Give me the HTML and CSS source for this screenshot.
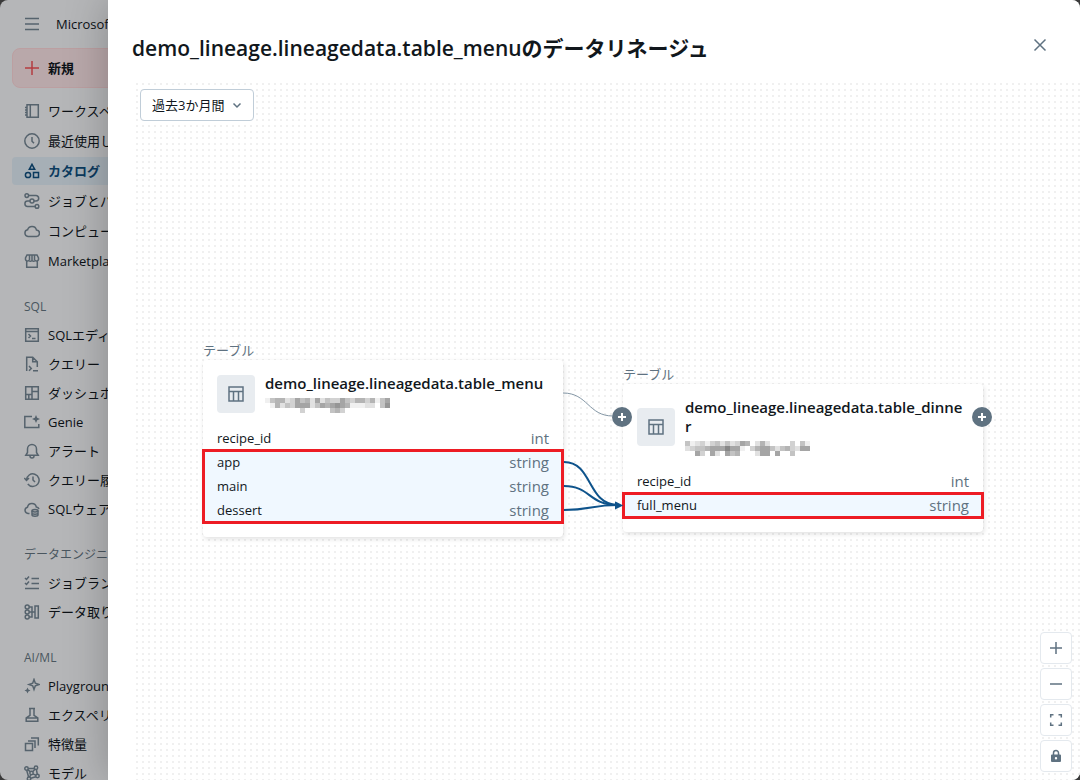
FILE: index.html
```html
<!DOCTYPE html>
<html lang="ja">
<head>
  <meta charset="UTF-8">
  <title>データリネージュ</title>
  <link rel="stylesheet" href="styles.css">
</head>
<body>

<div class="app">

  <!-- サイドバー -->
  <nav class="sidebar">
    <div class="brand">
      <button class="icon-btn" aria-label="メニュー">
        <svg class="icon" viewBox="0 0 16 16"><path d="M1 2.5h14M1 8h14M1 13.5h14"/></svg>
      </button>
      <span>Microsoft Azure</span>
    </div>

    <button class="new-btn">
      <svg class="icon" viewBox="0 0 16 16"><path d="M8 1v14M1 8h14"/></svg>
      新規
    </button>

    <div class="group main">
      <a href="#"><svg class="icon" viewBox="0 0 16 16"><path d="M3 1.7h11.3v12.6H3zM6.3 1.7v12.6M1 4.5h2M1 7h2M1 9.5h2M1 12h2"/></svg>ワークスペース</a>
      <a href="#"><svg class="icon" viewBox="0 0 16 16"><circle cx="8" cy="8" r="7.2"/><path d="M8 4v4.2l2 2"/></svg>最近使用したもの</a>
      <a href="#" class="active"><svg class="icon" viewBox="0 0 16 16"><path d="M8 1.3l2.7 5H5.3zM9.5 9.5h5v5h-5z"/><circle cx="4" cy="12" r="2.6"/></svg>カタログ</a>
      <a href="#"><svg class="icon" viewBox="0 0 16 16"><circle cx="2.800" cy="2.600" r="1.800"/><circle cx="8" cy="8" r="2"/><circle cx="13" cy="13.400" r="1.800"/><path d="M4.600 2.600H12a2.600 2.600 0 010 5.400h-2M6 8H3.600a2.700 2.700 0 000 5.400h7.600"/></svg>ジョブとパイプライン</a>
      <a href="#"><svg class="icon" viewBox="0 0 16 16"><path d="M4 13.500h8a3.200 3.200 0 00.500-6.400A4.600 4.600 0 003.600 6.800a3.400 3.400 0 00.4 6.700z"/></svg>コンピューティング</a>
      <a href="#"><svg class="icon" viewBox="0 0 16 16"><path d="M3 2h10l1.500 3v1.500a2 2 0 01-3.300 1 2.300 2.300 0 01-3.200 0 2.300 2.300 0 01-3.200 0 2 2 0 01-3.300-1V5zM2.700 8v6.300h10.600V8M5.500 2v5M8 2v5M10.500 2v5"/></svg>Marketplace</a>
    </div>

    <h3>SQL</h3>
    <div class="group">
      <a href="#"><svg class="icon" viewBox="0 0 16 16"><path d="M1.700 1.700h12.600v12.600H1.700zM1.700 4.500h12.600M4.500 7l2 2-2 2M8 11.500h3.500"/></svg>SQLエディタ</a>
      <a href="#"><svg class="icon" viewBox="0 0 16 16"><path d="M2.700 15V1.200h6l4.600 4.600V11M8.700 1.200v4.600h4.600M5 10l2.300 2.400L5 14.800M9 14.800h5"/></svg>クエリー</a>
      <a href="#"><svg class="icon" viewBox="0 0 16 16"><path d="M1.700 1.700h12.600v12.600H1.700zM8 1.700v12.600M1.700 9.500H8M8 6.500h6.300M4.800 9.500v4.800"/></svg>ダッシュボード</a>
      <a href="#"><svg class="icon" viewBox="0 0 16 16"><path d="M8 2.500H.8v11h14V10"/><path class="solid" d="M12 1l1.200 2.800L16 5l-2.800 1.200L12 9l-1.200-2.800L8 5l2.800-1.200z"/></svg>Genie</a>
      <a href="#"><svg class="icon" viewBox="0 0 16 16"><path d="M3.500 9.500V6a4.500 4.500 0 019 0v3.500l1.700 2.800H1.800zM6 13a2 2 0 004 0"/></svg>アラート</a>
      <a href="#"><svg class="icon" viewBox="0 0 16 16"><path d="M2.500 8A6.300 6.300 0 113.800 12M.3 6l2.200 2.500L5 6M9 4.500V8l2 2"/></svg>クエリー履歴</a>
      <a href="#"><svg class="icon" viewBox="0 0 16 16"><path d="M5.500 12.500H4a3.200 3.200 0 01-.5-6.300 4.500 4.500 0 018.800-.2A3 3 0 0115 8"/><ellipse cx="11" cy="9.800" rx="3" ry="1.200"/><path d="M8 9.800V14c0 1.600 6 1.600 6 0V9.800M8 12c0 1.600 6 1.600 6 0"/></svg>SQLウェアハウス</a>
    </div>

    <h3>データエンジニアリング</h3>
    <div class="group">
      <a href="#"><svg class="icon" viewBox="0 0 16 16"><path d="M1 3l1.500 1.500L5 1.500M1 8l1.500 1.500L5 6.500M7.500 3.500H15M7.500 8.500H15M1 13.500h14"/></svg>ジョブラン</a>
      <a href="#"><svg class="icon" viewBox="0 0 16 16"><circle cx="3.200" cy="3" r="2"/><circle cx="3.200" cy="8" r="2"/><circle cx="3.200" cy="13" r="2"/><path d="M5.200 3H8v10H5.200M5.200 8h6M11 8V2h3.300v12H11V8"/></svg>データ取り込み</a>
    </div>

    <h3>AI/ML</h3>
    <div class="group">
      <a href="#"><svg class="icon" viewBox="0 0 16 16"><path d="M10 1.500l1.300 3.700L15 6.500l-3.700 1.300L10 11.500 8.700 7.800 5 6.500l3.700-1.300z"/><path class="solid" d="M3.500 9.500l.9 2.100 2.100.9-2.100.9-.9 2.100-.9-2.100-2.100-.9 2.100-.9z"/></svg>Playground</a>
      <a href="#"><svg class="icon" viewBox="0 0 16 16"><path d="M5 1.500h6M6 1.500v6.800L2.200 11v3.300h11.600V11L10 8.300V1.500M2.500 11h11"/></svg>エクスペリメント</a>
      <a href="#"><svg class="icon" viewBox="0 0 16 16"><path d="M1.500 7.500h7v7h-7zM4 5h7v7M7 2h7.300v7.500"/></svg>特徴量</a>
      <a href="#"><svg class="icon" viewBox="0 0 16 16"><circle cx="2.500" cy="3.500" r="1.700"/><circle cx="12" cy="2.800" r="1.700"/><circle cx="7.500" cy="8" r="1.700"/><circle cx="13.500" cy="11" r="1.700"/><circle cx="5" cy="13.700" r="1.700"/><path d="M4.200 3.500h6M3.800 4.600l2.600 2.300M11 4.200L8.600 6.700M12.400 4.500l.9 4.800M9 8.800l3 1.600M6.800 9.500l-1.200 2.600M2.700 5.200l1.900 6.800M6.700 13.200l5.200-1.500"/></svg>モデル</a>
    </div>
  </nav>

  <!-- リネージュのドロワー -->
  <main class="drawer">
    <header class="drawer-head">
      <h1>demo_lineage.lineagedata.table_menuのデータリネージュ</h1>
      <button class="icon-btn close" aria-label="閉じる">
        <svg class="icon" viewBox="0 0 16 16"><path d="M2.500 2.500l11 11M13.500 2.500l-11 11"/></svg>
      </button>
    </header>

    <div class="canvas">
      <div class="period">
        <select aria-label="期間">
          <option>過去3か月間</option>
          <option>過去1年間</option>
        </select>
        <svg class="chevron" viewBox="0 0 10 10"><path d="M1.500 3.500L5 7l3.500-3.500"/></svg>
      </div>

      <section class="node menu">
        <div class="kind">テーブル</div>
        <div class="card">
          <div class="card-head">
            <span class="table-icon"><svg class="icon" viewBox="0 0 16 16"><path d="M1 1h14v14H1zM1 5.500h14M5.500 5.500V15M10.500 5.500V15"/></svg></span>
            <div class="card-title">
              <h2>demo_lineage.lineagedata.table_menu</h2>
              <svg class="mosaic" data-rows="1455236452624336435535146 0152436662465676511122047 0000000300000453000000000"></svg>
            </div>
          </div>
          <ul>
            <li><span>recipe_id</span><span class="type">int</span></li>
          </ul>
          <ul class="marked">
            <li><span>app</span><span class="type">string</span></li>
            <li><span>main</span><span class="type">string</span></li>
            <li><span>dessert</span><span class="type">string</span></li>
          </ul>
        </div>
      </section>

      <section class="node dinner">
        <div class="kind">テーブル</div>
        <div class="card">
          <div class="card-head">
            <span class="table-icon"><svg class="icon" viewBox="0 0 16 16"><path d="M1 1h14v14H1zM1 5.500h14M5.500 5.500V15M10.500 5.500V15"/></svg></span>
            <div class="card-title">
              <h2>demo_lineage.lineagedata.table_dinner</h2>
              <svg class="mosaic" data-rows="4123134242365025200003041 2344566686610356642453266 0063062064500026606004000"></svg>
            </div>
          </div>
          <ul>
            <li><span>recipe_id</span><span class="type">int</span></li>
          </ul>
          <ul class="marked">
            <li><span>full_menu</span><span class="type">string</span></li>
          </ul>
        </div>
        <button class="expand left" aria-label="上流を展開"><svg viewBox="0 0 10 10"><path d="M5 1v8M1 5h8"/></svg></button>
        <button class="expand right" aria-label="下流を展開"><svg viewBox="0 0 10 10"><path d="M5 1v8M1 5h8"/></svg></button>
      </section>

      <svg class="edges">
        <path class="thin" d="M431 310C456 310 456 333 481 333"/>
        <path d="M432 379C461 379 455 422 486 422"/>
        <path d="M432 403C459 403 456 422 486 422"/>
        <path d="M432 427C459 427 459 422 486 422"/>
        <path class="head" d="M484 420l5 2.500-5 2.500z"/>
      </svg>

      <div class="controls">
        <button aria-label="拡大"><svg class="icon" viewBox="0 0 16 16"><path d="M8 2v12M2 8h12"/></svg></button>
        <button aria-label="縮小"><svg class="icon" viewBox="0 0 16 16"><path d="M2 8h12"/></svg></button>
        <button aria-label="全体表示"><svg class="icon" viewBox="0 0 16 16"><path d="M2.700 5.500V2.700h2.800M10.500 2.700h2.800v2.800M13.300 10.500v2.800h-2.800M5.500 13.300H2.700v-2.800"/></svg></button>
        <button aria-label="ロック"><svg class="icon" viewBox="0 0 16 16"><path d="M5.500 7V5a2.500 2.500 0 015 0v2"/><path class="solid" fill-rule="evenodd" d="M4 6.500h8a1 1 0 011 1V13a1 1 0 01-1 1H4a1 1 0 01-1-1V7.500a1 1 0 011-1zM8 9a1.200 1.200 0 100 2.400A1.200 1.200 0 008 9z"/></svg></button>
      </div>
    </div>
  </main>

</div>

<script>
  // 所有者名のモザイク (0 = 白, 9 = 濃い)
  document.querySelectorAll('.mosaic').forEach(svg => {
    svg.dataset.rows.split(' ').forEach((row, y) => {
      [...row].forEach((level, x) => {
        if (level === '0') return;
        const c = 255 - level * 15;
        const rect = document.createElementNS('http://www.w3.org/2000/svg', 'rect');
        rect.setAttribute('x', x * 5);
        rect.setAttribute('y', y * 5);
        rect.setAttribute('width', 5);
        rect.setAttribute('height', 5);
        rect.setAttribute('fill', `rgb(${c},${c},${c})`);
        svg.appendChild(rect);
      });
    });
  });
</script>

</body>
</html>
```
FILE: styles.css
```css
* {
  box-sizing: border-box;
}
body {
  margin: 0;
  background: #3a3a3a;
  color: #11171c;
  font: 13px/20px "Open Sans", "Noto Sans CJK JP", sans-serif;
}
h1, h2, h3, ul {
  margin: 0;
  padding: 0;
}
button, select {
  font: inherit;
  color: inherit;
  cursor: pointer;
}
.icon {
  width: 16px;
  height: 16px;
  flex: none;
  fill: none;
  stroke: currentColor;
  stroke-width: 1.5;
}
.icon .solid {
  fill: currentColor;
  stroke: none;
}
.icon-btn {
  display: flex;
  align-items: center;
  padding: 0;
  border: 0;
  background: none;
  color: #5f7281;
}

.app {
  position: relative;
  height: 100vh;
  overflow: hidden;
  border-radius: 8px;
  background: #b5b6b8;
}

/* sidebar */
.sidebar {
  width: 200px;
  padding: 12px 12px 0;
  color: #0c1116;
  white-space: nowrap;
}
.sidebar .icon {
  color: #56636d;
}
.brand {
  display: flex;
  align-items: center;
  gap: 16px;
  height: 24px;
  padding-left: 12px;
}
.new-btn {
  display: flex;
  align-items: center;
  gap: 8px;
  width: 100%;
  height: 40px;
  margin: 12px 0 9px;
  padding: 0 11px;
  border: 1px solid #bc9fa1;
  border-radius: 8px;
  background: #b9a8aa;
  font-weight: 600;
}
.new-btn .icon {
  color: #b53c40;
}
.group {
  display: flex;
  flex-direction: column;
  gap: 1px;
}
.group.main {
  gap: 2px;
}
.group a {
  display: flex;
  align-items: center;
  gap: 8px;
  height: 28px;
  padding: 0 12px;
  border-radius: 4px;
  color: inherit;
  line-height: 14px;
  text-decoration: none;
}
.group a.active {
  background: #a6afb6;
  color: #0b3a5e;
  font-weight: 600;
}
.group a.active .icon {
  color: #0b3a5e;
}
.sidebar h3 {
  padding: 22px 12px 4px;
  color: #4a565f;
  font-size: 12px;
  font-weight: 400;
}

/* drawer */
.drawer {
  position: absolute;
  top: 0;
  right: 0;
  bottom: 0;
  width: 90%;
  display: flex;
  flex-direction: column;
  padding-left: 24px;
  background: #fff;
  box-shadow: 0 0 40px rgba(0, 0, 0, 0.25);
}
.drawer-head {
  display: flex;
  justify-content: space-between;
  align-items: flex-start;
  padding: 32px 32px 19px 0;
}
.drawer-head h1 {
  font-size: 21px;
  line-height: 32px;
  font-weight: 600;
}
.close {
  height: 26px;
}
.canvas {
  position: relative;
  flex: 1;
  padding: 6px 8px;
  background: radial-gradient(circle, #f0f0f0 1px, transparent 1px) 2px -2px / 6px 6px;
}
.period {
  position: relative;
  display: inline-block;
}
.period select {
  appearance: none;
  height: 32px;
  width: 114px;
  padding: 0 24px 0 11px;
  border: 1px solid #c0cdd8;
  border-radius: 4px;
  background: #fff;
}
.chevron {
  position: absolute;
  top: 11px;
  right: 12px;
  width: 10px;
  height: 10px;
  fill: none;
  stroke: #5f7281;
  stroke-width: 1.5;
  pointer-events: none;
}

/* lineage graph */
.node {
  position: absolute;
  width: 360px;
}
.node.menu {
  left: 71px;
  top: 257px;
}
.node.dinner {
  left: 491px;
  top: 281px;
}
.kind {
  color: #5f7281;
}
.card {
  padding: 14px 0 15px;
  border-radius: 4px;
  background: #fff;
  box-shadow: 1px 2px 5px rgba(0, 0, 0, 0.12);
}
.card-head {
  display: flex;
  align-items: center;
  gap: 10px;
  padding: 0 18px 13px 14px;
}
.table-icon {
  display: flex;
  align-items: center;
  justify-content: center;
  flex: none;
  width: 38px;
  height: 38px;
  border-radius: 4px;
  background: #e8ecf0;
  color: #5f7281;
}
.card-title {
  min-width: 0;
}
.card h2 {
  font-size: 15px;
  line-height: 19px;
  font-weight: 600;
  word-break: break-all;
}
.mosaic {
  display: block;
  width: 125px;
  height: 15px;
  margin-top: 5px;
  shape-rendering: crispEdges;
}
.card ul {
  list-style: none;
}
.card li {
  display: flex;
  align-items: center;
  justify-content: space-between;
  height: 24px;
  padding: 0 14px;
}
.type {
  color: #5f7281;
  font-size: 15px;
}
.marked {
  position: relative;
  background: #f0f8ff;
}
.marked::after {
  content: "";
  position: absolute;
  inset: -1px -1px -2px;
  border: 3px solid #ed1c24;
}
.expand {
  position: absolute;
  top: 43px;
  display: flex;
  align-items: center;
  justify-content: center;
  width: 20px;
  height: 20px;
  padding: 0;
  border: 0;
  border-radius: 50%;
  background: #5f7281;
}
.expand svg {
  width: 10px;
  height: 10px;
  stroke: #fff;
  stroke-width: 2;
}
.expand.left {
  left: -11px;
}
.expand.right {
  right: -9px;
}
.edges {
  position: absolute;
  inset: 0;
  width: 100%;
  height: 100%;
  fill: none;
  stroke: #0e538b;
  stroke-width: 2;
  pointer-events: none;
}
.edges .thin {
  stroke: #8396a5;
  stroke-width: 1;
}
.edges .head {
  fill: #0e538b;
}

.controls {
  position: absolute;
  right: 8px;
  bottom: 8px;
  display: flex;
  flex-direction: column;
  gap: 4px;
}
.controls button {
  display: flex;
  align-items: center;
  justify-content: center;
  width: 32px;
  height: 32px;
  padding: 0;
  border: 1px solid #e4e9ee;
  border-radius: 4px;
  background: #fff;
  color: #5f7281;
}
```
